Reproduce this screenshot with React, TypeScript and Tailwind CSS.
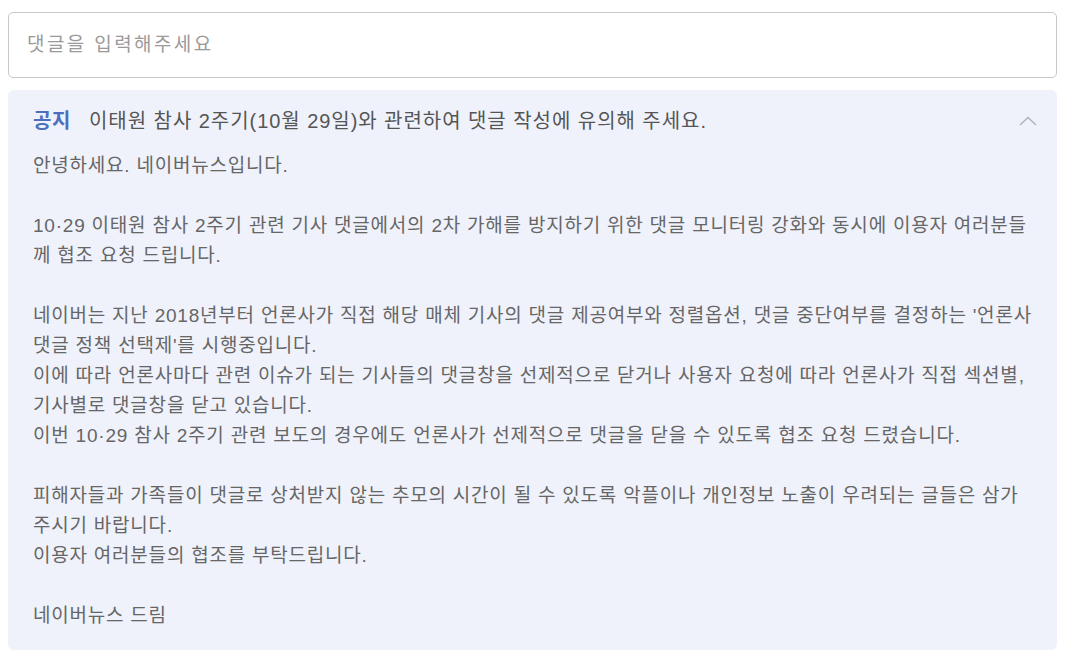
import React from "react";

const font = { fontFamily: '"Liberation Sans", "Noto Sans CJK KR", sans-serif' };

const paragraphs: string[][] = [
  ["안녕하세요. 네이버뉴스입니다."],
  [
    "10·29 이태원 참사 2주기 관련 기사 댓글에서의 2차 가해를 방지하기 위한 댓글 모니터링 강화와 동시에 이용자 여러분들",
    "께 협조 요청 드립니다.",
  ],
  [
    "네이버는 지난 2018년부터 언론사가 직접 해당 매체 기사의 댓글 제공여부와 정렬옵션, 댓글 중단여부를 결정하는 '언론사",
    "댓글 정책 선택제'를 시행중입니다.",
    "이에 따라 언론사마다 관련 이슈가 되는 기사들의 댓글창을 선제적으로 닫거나 사용자 요청에 따라 언론사가 직접 섹션별,",
    "기사별로 댓글창을 닫고 있습니다.",
    "이번 10·29 참사 2주기 관련 보도의 경우에도 언론사가 선제적으로 댓글을 닫을 수 있도록 협조 요청 드렸습니다.",
  ],
  [
    "피해자들과 가족들이 댓글로 상처받지 않는 추모의 시간이 될 수 있도록 악플이나 개인정보 노출이 우려되는 글들은 삼가",
    "주시기 바랍니다.",
    "이용자 여러분들의 협조를 부탁드립니다.",
  ],
  ["네이버뉴스 드림"],
];

export default function App() {
  return (
    <div className="w-[1069px] h-[660px] bg-white pl-2 pr-3 pt-3" style={font}>
      <div className="h-[66px] border border-[#c8c8c8] rounded-[5px] flex items-center px-[18px]">
        <span className="text-[19px] text-[#9a9a9a] tracking-[2.4px]">댓글을 입력해주세요</span>
      </div>
      <div className="mt-[12px] bg-[#eff2fb] rounded-[6px] pl-[25px] pr-[20px] pt-[16px] pb-[19px]">
        <div className="flex items-center h-[30px]">
          <span className="text-[20px] font-bold text-[#4d6fbd] w-[56px] tracking-[0.5px]">공지</span>
          <span className="text-[20px] text-[#555] tracking-[0.95px] flex-1">
            이태원 참사 2주기(10월 29일)와 관련하여 댓글 작성에 유의해 주세요.
          </span>
          <svg width="20" height="12" viewBox="0 0 20 12" className="-mr-[1px]">
            <path d="M2 10 L10 2.5 L18 10" fill="none" stroke="#b0b0b4" strokeWidth="1.4" />
          </svg>
        </div>
        <div className="mt-[15px] flex flex-col gap-[30px] text-[19px] leading-[30px] text-[#666] tracking-[0.78px]">
          {paragraphs.map((p, i) => (
            <div key={i}>
              {p.map((line, j) => (
                <div key={j} className="whitespace-nowrap">
                  {line}
                </div>
              ))}
            </div>
          ))}
        </div>
      </div>
    </div>
  );
}
